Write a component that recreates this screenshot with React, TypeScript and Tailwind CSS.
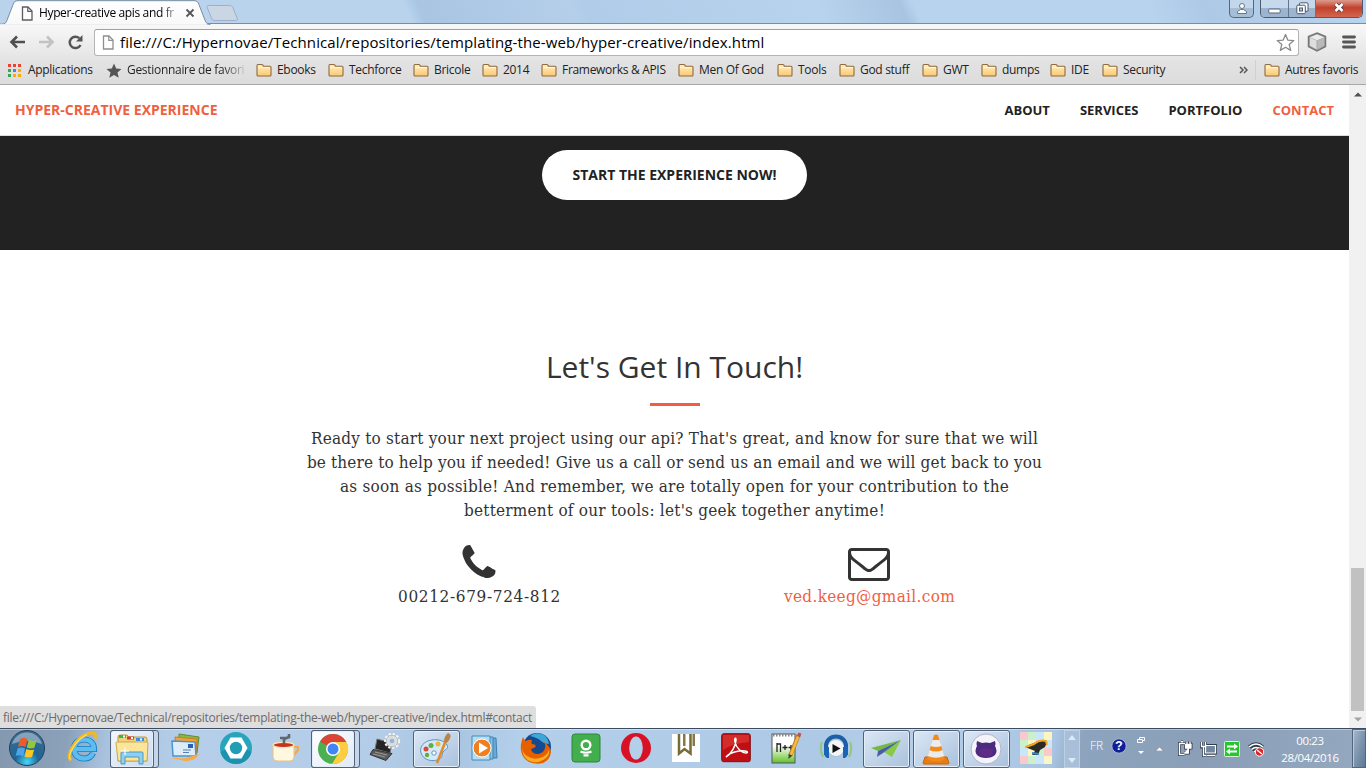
import type { ReactNode } from "react";

const sans = "font-['Open_Sans',sans-serif]";
const serif = "font-['DejaVu_Serif_Condensed','DejaVu_Serif',serif]";

function Svg({ w, h, className = "", children }: { w: number; h: number; className?: string; children: ReactNode }) {
  return (
    <svg width={w} height={h} viewBox={`0 0 ${w} ${h}`} className={`shrink-0 ${className}`} aria-hidden="true">
      {children}
    </svg>
  );
}

/* ---------- Window title bar ---------- */

function PageIcon({ stroke = "#5c5c5c" }: { stroke?: string }) {
  return (
    <Svg w={12} h={15}>
      <path d="M1.5 1h5.5l4 4v9h-9.5z" fill="#fff" stroke={stroke} strokeWidth="1.3" />
      <path d="M6.8 1v4.4h4.2" fill="none" stroke={stroke} strokeWidth="1.2" />
    </Svg>
  );
}

function TitleBar() {
  return (
    <div className="relative flex h-6 shrink-0 bg-[linear-gradient(65deg,#b9d3ed_0%,#b9d3ed_30%,#a9c5e2_31%,#b5cfea_42%,#b0cce8_43%,#b8d3ed_60%,#a8c4e1_66%,#b8d3ed_67%,#b8d3ed_84%,#adc9e6_88%,#b9d4ee_100%)]">
      <svg width="240" height="25" viewBox="0 0 240 25" className="absolute left-0 top-0" aria-hidden="true">
        <defs>
          <linearGradient id="tab" x1="0" y1="0" x2="0" y2="1">
            <stop offset="0" stopColor="#fff" />
            <stop offset="1" stopColor="#f8f8f8" />
          </linearGradient>
        </defs>
        <path d="M0 24.2h2c3 0 4-1.500 5-4l6-15.500c1-2.800 2-4 5-4h176c3 0 4 1.200 5 4l6 15.500c1 2.500 2 4 5 4v.8H0z" fill="url(#tab)" stroke="#7b8ca3" strokeWidth="1" />
        <path d="M0 24.700h207" stroke="#f8f8f8" />
        <path d="M208.500 5.500h21c2 0 2.800.8 3.400 2.200l4.300 10.600c.6 1.500 0 2.200-1.500 2.200h-20.500c-2 0-3-.8-3.600-2.200l-4.300-10.600c-.6-1.500-.1-2.200 1.200-2.200z" fill="#cbd6e4" stroke="#9db0c9" />
      </svg>
      <div className="relative flex h-6 w-52 items-center pl-[21px] pt-0.5">
        <PageIcon />
        <div className="ml-1.5 w-[139px] whitespace-nowrap bg-linear-to-r from-black from-86% to-[#ddd] bg-clip-text text-xs tracking-[-0.36px] text-transparent">
          Hyper-creative apis and fr
        </div>
        <Svg w={10} h={10} className="ml-[7px]">
          <path d="M1.500 1.500l7 7M8.500 1.500l-7 7" stroke="#555" strokeWidth="1.800" />
        </Svg>
      </div>
      <div className="relative ml-auto mr-[3px] flex h-[18px] items-start">
        <div className="mr-1.5 flex h-[18px] w-[25px] items-center justify-center rounded-b-[5px] border border-t-0 border-[#56677e] bg-linear-to-b from-[#c3d6ea] from-50% to-[#a6bdd6] to-50%">
          <Svg w={12} h={13}>
            <circle cx="6" cy="4" r="2.500" fill="#fff" stroke="#66758a" />
            <path d="M1.500 11.500v-2l3-2h3l3 2v2z" fill="#fff" stroke="#66758a" />
          </Svg>
        </div>
        <div className="flex h-[18px] w-[103px] overflow-hidden rounded-b-[5px] border border-t-0 border-[#4d5a70]">
          <div className="flex w-7 items-center justify-center border-r border-[#65758c] bg-linear-to-b from-[#c6d8eb] from-45% to-[#9db4ce] to-45%">
            <Svg w={13} h={12}>
              <rect x=".7" y="6" width="11.500" height="4" rx="1" fill="#fff" stroke="#58667b" />
            </Svg>
          </div>
          <div className="flex w-[27px] items-center justify-center border-r border-[#65758c] bg-linear-to-b from-[#c6d8eb] from-45% to-[#9db4ce] to-45%">
            <Svg w={13} h={13} className="-mt-px">
              <rect x="3.500" y=".8" width="8.500" height="8.500" rx="1" fill="#fff" stroke="#49566b" />
              <rect x=".8" y="3.200" width="8.500" height="8.500" rx="1" fill="#fff" stroke="#49566b" />
              <rect x="3.500" y="6" width="3" height="3" fill="#b8cbe0" stroke="#49566b" />
            </Svg>
          </div>
          <div className="flex flex-1 items-center justify-center bg-linear-to-b from-[#dc9a8e] from-0% via-[#c0402b] via-45% to-[#d4664e]">
            <Svg w={12} h={11} className="-mt-0.5">
              <path d="M2.500 2l7 7M9.500 2l-7 7" stroke="#5c3a42" strokeWidth="4.400" />
              <path d="M2.500 2l7 7M9.500 2l-7 7" stroke="#fff" strokeWidth="2.600" />
            </Svg>
          </div>
        </div>
      </div>
      <div className="absolute bottom-0 left-52 right-0 h-px bg-[#7b8ca3]" />
    </div>
  );
}

/* ---------- Address bar ---------- */

function Toolbar() {
  return (
    <div className="flex h-9 shrink-0 items-center bg-linear-to-b from-[#f8f8f8] to-[#e4e4e4] pl-[9px]">
      <Svg w={17} h={14}>
        <path d="M8 1.500L2.500 7L8 12.500M2.500 7H16" fill="none" stroke="#4f4f4f" strokeWidth="2.600" />
      </Svg>
      <Svg w={17} h={14} className="ml-3">
        <path d="M9 1.500L14.500 7L9 12.500M14.500 7H1" fill="none" stroke="#c2c2c2" strokeWidth="2.600" />
      </Svg>
      <Svg w={17} h={17} className="ml-3">
        <path d="M12.300 4.200A5.700 5.700 0 1 0 13.500 11" fill="none" stroke="#555" strokeWidth="2.500" />
        <path d="M15.500 1v6.500H9z" fill="#555" />
      </Svg>
      <div className="ml-[10px] flex h-[27px] w-[1205px] items-center rounded-[3px] border border-[#b4b4b4] border-t-[#9f9f9f] bg-white pl-[7px] pr-[3px]">
        <PageIcon stroke="#8f8f8f" />
        <span className="ml-1.5 text-[15px] tracking-[0.12px] text-black">
          file:///C:/Hypernovae/Technical/repositories/templating-the-web/hyper-creative/index.html
        </span>
        <Svg w={19} h={19} className="ml-auto">
          <path d="M9.500 1.500l2.300 5.600 6 .5-4.600 3.900 1.500 5.900-5.200-3.200-5.200 3.200 1.500-5.900L1.200 7.600l6-.5z" fill="#fff" stroke="#8a8a8a" strokeWidth="1.300" strokeLinejoin="round" />
        </Svg>
      </div>
      <Svg w={20} h={20} className="ml-2">
        <path d="M10 1l8.500 3.500v10L10 19l-8.500-4.500v-10z" fill="#a9a9a9" stroke="#777" strokeWidth="1.500" />
        <path d="M10 2.500l7 2.700-7 3-7-3z" fill="#ececec" />
        <path d="M3 5.800l6.500 2.800v8.700L3 13.800z" fill="#dedede" />
        <path d="M17 5.800l-6.500 2.800v8.700l6.500-3.500z" fill="#b9b9b9" />
      </Svg>
      <Svg w={14} h={14} className="ml-[15px]">
        <path d="M1.500 2h11M1.500 7h11M1.500 12h11" stroke="#555" strokeWidth="2.800" strokeLinecap="round" />
      </Svg>
    </div>
  );
}

/* ---------- Bookmarks ---------- */

function Folder() {
  return (
    <Svg w={16} h={14}>
      <defs>
        <linearGradient id="fold" x1="0" y1="0" x2="0" y2="1">
          <stop offset="0" stopColor="#ffeec4" />
          <stop offset="1" stopColor="#fbc970" />
        </linearGradient>
      </defs>
      <path d="M1 11.500V2.500q0-1 1-1h4q1 0 1 1l.3.800h6.700q1 0 1 1v7.700q0 1-1 1H2q-1 0-1-1z" fill="url(#fold)" stroke="#8f6b3f" strokeWidth="1.100" />
      <path d="M2 4.600h12" stroke="#fff7e2" />
    </Svg>
  );
}

const bookmarks: [string, string][] = [
  ["Ebooks", "w-[72px]"],
  ["Techforce", "w-[85px]"],
  ["Bricole", "w-[69px]"],
  ["2014", "w-[59px]"],
  ["Frameworks & APIS", "w-[137px]"],
  ["Men Of God", "w-[99px]"],
  ["Tools", "w-[62px]"],
  ["God stuff", "w-[83px]"],
  ["GWT", "w-[59px]"],
  ["dumps", "w-[69px]"],
  ["IDE", "w-[52px]"],
  ["Security", "w-[70px]"],
];

const appDots = ["#ea4335", "#ea4335", "#ea4335", "#34a853", "#4285f4", "#fbab05", "#34a853", "#fbab05", "#fbab05"];

function BookmarkBar() {
  return (
    <div className="flex h-[25px] shrink-0 items-center whitespace-nowrap border-b border-[#a8a8a8] bg-linear-to-b from-[#e3e3e3] to-[#dcdcdc] pb-1 pl-2 text-xs tracking-[-0.3px] text-[#222]">
      <div className="flex w-[98px] items-center">
        <Svg w={13} h={13}>
          {appDots.map((c, i) => (
            <rect key={i} x={(i % 3) * 5} y={Math.floor(i / 3) * 5} width="3" height="3" fill={c} />
          ))}
        </Svg>
        <span className="ml-[7px]">Applications</span>
      </div>
      <div className="flex w-[150px] items-center">
        <Svg w={16} h={15}>
          <path d="M8 .5l2.200 4.900 5.300.6-4 3.600 1.200 5.200L8 12.100l-4.700 2.700 1.200-5.200-4-3.600 5.300-.6z" fill="#555" />
        </Svg>
        <span className="ml-[5px] w-[118px] bg-linear-to-r from-[#222] from-80% to-[#ccc] bg-clip-text text-transparent">Gestionnaire de favori</span>
      </div>
      {bookmarks.map(([name, width]) => (
        <div key={name} className={`flex shrink-0 items-center gap-[5px] ${width}`}>
          <Folder />
          <span>{name}</span>
        </div>
      ))}
      <Svg w={9} h={8} className="ml-[67px]">
        <path d="M1 1l3 3-3 3M5 1l3 3-3 3" fill="none" stroke="#555" strokeWidth="1.500" />
      </Svg>
      <div className="ml-[7px] flex h-5 items-center gap-[5px] border-l border-[#c4d3e2] pl-2">
        <Folder />
        <span>Autres favoris</span>
      </div>
    </div>
  );
}

/* ---------- Web page ---------- */

function SiteNav() {
  return (
    <nav className="flex h-[51px] items-center justify-between border-b border-[#dcdcdc] bg-white px-[15px] font-bold text-[#222]">
      <a className="text-sm text-[#f05f40]">HYPER-CREATIVE EXPERIENCE</a>
      <div className="flex gap-[30px] pt-0.5 text-[13px]">
        <a>ABOUT</a>
        <a>SERVICES</a>
        <a>PORTFOLIO</a>
        <a className="text-[#f05f40]">CONTACT</a>
      </div>
    </nav>
  );
}

const paragraph: [string, string][] = [
  ["Ready to start your next project using our api? That's great, and know for sure that we will", "tracking-[0.21px]"],
  ["be there to help you if needed! Give us a call or send us an email and we will get back to you", "tracking-[0.145px]"],
  ["as soon as possible! And remember, we are totally open for your contribution to the", "tracking-[0.235px]"],
  ["betterment of our tools: let's geek together anytime!", "tracking-[0.23px]"],
];

function Site() {
  return (
    <div className="flex min-w-0 flex-1 flex-col bg-white">
      <SiteNav />
      <div className="flex h-[114px] shrink-0 justify-center bg-[#222] pt-3.5">
        <button className="h-[50px] w-[265px] rounded-full bg-white text-sm font-bold text-[#222]">START THE EXPERIENCE NOW!</button>
      </div>
      <section className="flex flex-1 flex-col items-center pt-[100px] text-[#333]">
        <h2 className="text-[30px] leading-[33px]">Let's Get In Touch!</h2>
        <hr className="mt-5 h-[3px] w-[50px] border-0 bg-[#f05f40]" />
        <div className={`mt-5 text-center text-[17px] leading-6 ${serif}`}>
          {paragraph.map(([line, tracking]) => (
            <div key={line} className={`whitespace-nowrap ${tracking}`}>{line}</div>
          ))}
        </div>
        <div className={`mt-5 grid grid-cols-[390px_390px] text-[17px] leading-6 ${serif}`}>
          <div className="flex flex-col items-center">
            <svg width="42" height="42" viewBox="0 0 1792 1792" className="mr-px" aria-hidden="true">
              <path fill="#333" d="M1600 1240q0 27-10 70.5t-21 68.5q-21 50-122 106-94 51-186 51-27 0-53-3.500t-57.500-12.500-47-14.500-55.500-20.500-49-18q-98-35-175-83-127-79-264-216t-216-264q-48-77-83-175-3-9-18-49t-20.500-55.500-14.500-47-12.500-57.500-3.500-53q0-92 51-186 56-101 106-122 25-11 68.500-21t70.500-10q14 0 21 3 18 6 53 76 11 19 30 54t35 63.500 31 53.500q3 4 17.500 25t21.500 35.500 7 28.500q0 20-28.500 50t-62 55-62 53-28.500 46q0 9 5 22.500t8.500 20.500 14 24 11.500 19q76 137 174 235t235 174q2 1 19 11.500t24 14 20.500 8.500 22.500 5q18 0 46-28.500t53-62 55-62 50-28.500q14 0 28.500 7t35.500 21.500 25 17.500q25 15 53.500 31t63.500 35 54 30q70 35 76 53 3 7 3 21z" />
            </svg>
            <span className="tracking-[0.66px]">00212-679-724-812</span>
          </div>
          <div className="flex flex-col items-center">
            <svg width="42" height="42" viewBox="0 0 1792 1792" className="mr-px" aria-hidden="true">
              <path fill="#333" d="M1664 1504v-768q-32 36-69 66-268 206-426 338-51 43-83 67t-86.500 48.500-102.500 24.500h-2q-48 0-102.500-24.500t-86.500-48.500-83-67q-158-132-426-338-37-30-69-66v768q0 13 9.500 22.500t22.500 9.500h1472q13 0 22.500-9.500t9.500-22.500zm0-1051v-24.500l-.5-13-3-12.500-5.500-9-9-7.500-14-2.500h-1472q-13 0-22.500 9.500t-9.500 22.500q0 168 147 284 193 152 401 317 6 5 35 29.500t46 37.500 44.500 31.500 50.500 27.500 43 9h2q20 0 43-9t50.500-27.500 44.500-31.500 46-37.500 35-29.500q208-165 401-317 54-43 100.500-115.500t46.500-131.500zm128-37v1088q0 66-47 113t-113 47h-1472q-66 0-113-47t-47-113v-1088q0-66 47-113t113-47h1472q66 0 113 47t47 113z" />
            </svg>
            <a className="tracking-[0.33px] text-[#f05f40]">ved.keeg@gmail.com</a>
          </div>
        </div>
      </section>
    </div>
  );
}

function ScrollBar() {
  return (
    <div className="flex w-[17px] shrink-0 flex-col items-center bg-[#f1f1f1] pb-1.5 pt-[7px]">
      <Svg w={8} h={5}>
        <path d="M0 4.500L4 .5l4 4z" fill="#505050" />
      </Svg>
      <div className="mt-auto h-[143px] w-[13px] bg-[#c1c1c1]" />
      <Svg w={8} h={5} className="mt-1.5">
        <path d="M0 .5l4 4 4-4z" fill="#a3a3a3" />
      </Svg>
    </div>
  );
}

/* ---------- Task bar ---------- */

function StartOrb() {
  return (
    <Svg w={38} h={38}>
      <defs>
        <radialGradient id="orb" cx=".5" cy=".9" r=".85">
          <stop offset="0" stopColor="#45d8f8" />
          <stop offset=".4" stopColor="#1d6596" />
          <stop offset="1" stopColor="#3f6c90" />
        </radialGradient>
      </defs>
      <circle cx="19" cy="19" r="17.500" fill="url(#orb)" stroke="#23405c" />
      <path d="M4 15a15.500 15.500 0 0 1 30 0q-15-6-30 0z" fill="#fff" opacity=".38" />
      <path d="M12 10q3.500-2 7.500.2l-2 7.800q-4-2-7.500-.3z" fill="#ef5a28" />
      <path d="M20.800 10.800q3.500 2 7.800.4l-2.200 7.600q-4 1.700-7.600-.3z" fill="#93c83d" />
      <path d="M9.700 19.300q3.500-1.700 7.400.3l-2 7.600q-3.800-2-7.500-.2z" fill="#4aa6e8" />
      <path d="M18.400 20q3.800 2 7.800.4l-2.200 7.500q-4 1.600-7.600-.4z" fill="#fdc422" />
    </Svg>
  );
}

function IeIcon() {
  return (
    <Svg w={32} h={34}>
      <path d="M7.500 18h19.500c0-5.500-4-9.500-10-9.500s-10 4-10 9.500 4 9.500 10 9.500c4 0 7.500-2 9-5.500" fill="none" stroke="#1b7cc0" strokeWidth="6.200" />
      <path d="M7.500 18h19.500c0-5.500-4-9.500-10-9.500s-10 4-10 9.500 4 9.500 10 9.500c4 0 7.500-2 9-5.500" fill="none" stroke="#5cbdf0" strokeWidth="4.400" />
      <path d="M4 29.500C-1.500 25 8 8 19 3.500c6-2.800 11-2 9.200 4" fill="none" stroke="#f4b91e" strokeWidth="3" />
      <path d="M3.500 28.500C0 24 9 8.500 20 3.800" fill="none" stroke="#ffe170" strokeWidth="1.100" />
    </Svg>
  );
}

function ExplorerIcon() {
  return (
    <Svg w={34} h={32}>
      <path d="M3 4q0-2 2-2h7l2 2h16q2 0 2 2v22H3z" fill="#efd27a" stroke="#b9973f" />
      <path d="M4 2h7v3H4z" fill="#3bb54a" /><path d="M12 3.500h7v3h-7z" fill="#d8362f" /><path d="M21 5h8v3h-8z" fill="#3d8fe0" />
      <path d="M8 3.500h2M16 5h2M25 6.500h2" stroke="#fff" strokeWidth="2" />
      <path d="M2 9h30q1 0 1 1l-1 18H3L1 10q0-1 1-1z" fill="#fae59a" stroke="#c9a953" />
      <path d="M6 31V20q0-1 1-1h20q1 0 1 1v11h-4v-7H10v7z" fill="#8fd0ef" stroke="#4c98c5" />
      <path d="M10 14v8M6 18h8" stroke="#fff" strokeWidth="1.200" />
    </Svg>
  );
}

function MailIcon() {
  return (
    <Svg w={34} h={32}>
      <path d="M10 2l20 3-2 16-18-3z" fill="#86b949" stroke="#5f8c34" />
      <path d="M6 5l22 2-1 16-20-2z" fill="#f2a03a" stroke="#ca7d20" />
      <path d="M3 9l23 1 1 14H4z" fill="#dcecf9" stroke="#4a95cf" strokeWidth="1.500" />
      <rect x="19" y="12" width="5" height="4" fill="#2b5eb5" />
      <path d="M14 18h8M14 20.500h6" stroke="#5b7fae" />
      <path d="M0 27c7-3 10 0 16-1s9-3 14-4c-3 5-6 6-11 7s-12-4-19-2z" fill="#f6ab4b" />
    </Svg>
  );
}

function HexIcon() {
  return (
    <Svg w={34} h={34}>
      <circle cx="17" cy="17" r="16" fill="#27a5bd" />
      <path d="M1.500 21A16 16 0 0 0 32.500 21Q17 12 1.500 21z" fill="#1b93ad" />
      <path d="M11.500 6.500h11L28.500 17l-6 10.500h-11L5.500 17z" fill="#fff" />
      <circle cx="17" cy="17" r="6.200" fill="#229db6" />
    </Svg>
  );
}

function CupIcon() {
  return (
    <Svg w={32} h={32}>
      <path d="M23 15h5v3l-5 6" fill="none" stroke="#f0a855" strokeWidth="2.200" />
      <path d="M3 13h21v12q0 4-4 4H7q-4 0-4-4z" fill="#fff8e0" stroke="#ecc377" />
      <ellipse cx="13.500" cy="13" rx="10.500" ry="2.600" fill="#c5321d" stroke="#fbe3b2" strokeWidth="1.200" />
      <path d="M14 11V7l5-2V2M10 6h7" fill="none" stroke="#62676d" strokeWidth="2.600" />
    </Svg>
  );
}

function ChromeIcon() {
  return (
    <Svg w={32} h={32}>
      <circle cx="16" cy="16" r="15" fill="#4caf50" />
      <path d="M16 16L3 8.500A15 15 0 0 1 29 8.500z" fill="#db4437" />
      <path d="M16 9h13.300A15 15 0 0 1 15 31l7-11.500z" fill="#ffcd40" />
      <circle cx="16" cy="16" r="7" fill="#fff" />
      <circle cx="16" cy="16" r="5.500" fill="#4285f4" />
    </Svg>
  );
}

function LaptopIcon() {
  return (
    <Svg w={34} h={32}>
      <path d="M8 7l15 4-2 10-15-4z" fill="#252525" stroke="#777" />
      <path d="M4 17.500l19 4-6 7-16-6z" fill="#5b5b5b" stroke="#333" />
      <path d="M6 20l12 3M4 22l12 3" stroke="#aaa" strokeWidth=".8" />
      <circle cx="23" cy="9" r="6.500" fill="#d9dde1" stroke="#f4f5f6" strokeWidth="3" strokeDasharray="2.200 1.600" />
      <circle cx="23" cy="9" r="5.800" fill="none" stroke="#b5babf" />
      <circle cx="23" cy="9" r="2.300" fill="#9ab5d0" />
    </Svg>
  );
}

function PaintIcon() {
  return (
    <Svg w={36} h={34}>
      <path d="M14 8C6 9 1 15 3 21s9 9 16 7 4-5 6-8 6-3 4-7-8-6-15-5z" fill="#d5e9f7" stroke="#5c93bf" />
      <circle cx="8" cy="17" r="2.500" fill="#d64a3a" /><circle cx="13" cy="13.500" r="2.500" fill="#5bb147" />
      <circle cx="20" cy="12" r="2.500" fill="#efb83a" /><circle cx="9" cy="23" r="2.200" fill="#5bb147" /><circle cx="16" cy="21" r="2.200" fill="#fff" stroke="#5c93bf" />
      <path d="M28 8L19 31" stroke="#e08a32" strokeWidth="2.600" />
      <path d="M26 10q0-6 4-9 3 1 2.500 4T28.500 11z" fill="#b98449" />
    </Svg>
  );
}

function MediaPlayerIcon() {
  return (
    <Svg w={32} h={30}>
      <path d="M8 5h18l1 20H9z" fill="#6ba9d4" stroke="#3c82b4" /><path d="M5 4h18v22H5z" fill="#8cc1e2" stroke="#3c82b4" />
      <path d="M2 3h18v24H2z" fill="#b9dcf0" stroke="#3c8dbd" />
      <circle cx="12" cy="15" r="9" fill="#f0801f" stroke="#fff" />
      <path d="M9 9.500v11l9-5.500z" fill="#fff" />
    </Svg>
  );
}

function FirefoxIcon() {
  return (
    <Svg w={32} h={32}>
      <circle cx="17" cy="15" r="14" fill="#17498f" />
      <path d="M10 4q6-5 14-1 4 3 5 9-5 0-8-3t-11-5z" fill="#3fa7d8" />
      <path d="M3 5q1 3 3 4 3-2 6-1-1 2 0 4 3 0 4 2-2 3-5 3 1 5 7 5 6-1 7-6 1-3-1-6 6 4 7 10-1 8-8 11-7 2-14-1C0 25-1 15 3 5z" fill="#e66000" />
      <path d="M2 14q0 7 5 10 6 4 13 2 7-2 9-8 1 4-3 8-6 5-13 4Q2 28 2 14z" fill="#ffae22" />
    </Svg>
  );
}

function GreenIcon() {
  return (
    <Svg w={30} h={30}>
      <rect x="1" y="1" width="28" height="28" rx="3" fill="#43ae4e" stroke="#2c8738" />
      <circle cx="15" cy="12" r="4.300" fill="none" stroke="#fff" strokeWidth="2.400" />
      <path d="M9.500 18.500q5.500 2.500 11 0M12.500 22.300h5" fill="none" stroke="#fff" strokeWidth="2.200" />
    </Svg>
  );
}

function OperaIcon() {
  return (
    <Svg w={32} h={32}>
      <circle cx="16" cy="16" r="15" fill="#d81224" />
      <ellipse cx="16" cy="16" rx="6.800" ry="11.500" fill="#b4cfea" />
    </Svg>
  );
}

function RibbonIcon() {
  return (
    <Svg w={30} h={30}>
      <rect x="1" y="1" width="28" height="28" fill="#fff" />
      <path d="M8 1v19.500l5.500-4.500 6 4.500V1" fill="none" stroke="#766c34" strokeWidth="2.500" />
      <path d="M12 1h2.500v12H12zM21.500 1H24v12h-2.500z" fill="#766c34" opacity=".9" />
    </Svg>
  );
}

function AcrobatIcon() {
  return (
    <Svg w={30} h={30}>
      <rect x=".7" y=".7" width="28.600" height="28" rx="2" fill="#c00f14" stroke="#7e1014" />
      <path d="M2 2h26v7Q12 10 2 17z" fill="#d42c2a" />
      <path d="M5 24c5-3 10-11 10-17 0-3-2-2-1 2 1 6 7 11 11 11 4-1-1-3-7-2S8 20 5 24z" fill="none" stroke="#fff" strokeWidth="1.500" />
    </Svg>
  );
}

function NotepadIcon() {
  return (
    <Svg w={32} h={34}>
      <defs>
        <linearGradient id="np" x1="0" y1="0" x2="0" y2="1">
          <stop offset=".4" stopColor="#fff" /><stop offset="1" stopColor="#61c224" />
        </linearGradient>
      </defs>
      <rect x="2" y="3" width="23" height="29" fill="url(#np)" stroke="#556" />
      <path d="M3 4h21" stroke="#888" strokeWidth="3" strokeDasharray="1.500 1.500" />
      <path d="M7 21v-9M7 13h3.500v8M12.500 16.500h5M15 14v5M18.500 16.500h5M21 14v5" fill="none" stroke="#222" strokeWidth="1.300" />
      <path d="M28.500 4l-8 20" stroke="#b67a1e" strokeWidth="4.200" /><path d="M28.300 5l-7.500 19" stroke="#f6bc3d" strokeWidth="2.600" />
      <path d="M27 5l1.500-3.500 3 1.200L30 6.200z" fill="#b9505a" /><path d="M18.500 23l4 1.500-4 3.500z" fill="#443" />
    </Svg>
  );
}

function HeadphonesIcon() {
  return (
    <Svg w={34} h={30}>
      <path d="M3 9q-3 7 1 15M31 9q3 7-1 15" fill="none" stroke="#93c77e" strokeWidth="2" />
      <circle cx="17" cy="15" r="8.500" fill="#f3f6f9" stroke="#abc0d3" />
      <path d="M7 22V13a10 9.500 0 0 1 20 0v9" fill="none" stroke="#1b5fa8" strokeWidth="4" />
      <path d="M5 14h5v11H8q-3-2-3-6zM29 14h-5v11h2q3-2 3-6z" fill="#1a65b5" />
      <path d="M13.500 11v9l8-4.500z" fill="#111" />
    </Svg>
  );
}

function PlaneIcon() {
  return (
    <Svg w={32} h={22}>
      <path d="M31 2L1 10l7 3z" fill="#74b943" /><path d="M31 2L8 13l-1 6z" fill="#4a5ca8" />
      <path d="M31 2L14 14l8 5z" fill="#87cb45" /><path d="M31 2L9 18l5-4z" fill="#36478f" />
    </Svg>
  );
}

function VlcIcon() {
  return (
    <Svg w={30} h={32}>
      <path d="M4 24h22l2 6q0 1-1 1H3q-1 0-1-1z" fill="#e87c12" stroke="#c96508" />
      <path d="M13 2q2-1 4 0l7 24q-9 5-18 0z" fill="#f28a1c" />
      <path d="M11.500 7h7l2 6q-5.500 2-11 0zM8.500 17q6.500 3 13 0l1.800 6q-8.300 3.500-16.600 0z" fill="#ececec" />
    </Svg>
  );
}

function GithubIcon() {
  return (
    <Svg w={32} h={32}>
      <circle cx="16" cy="16" r="15" fill="#f5f3fa" stroke="#b3b3cc" />
      <path d="M7 8l5 2q4-1 8 0l5-2q1 3 0 5 3 5 0 9-3 3-9 3t-9-3q-3-4 0-9-1-2 0-5z" fill="#4b2a7f" />
      <path d="M9 17q7-4 14 0l-1 5q-6 3-12 0z" fill="#5f2b86" />
    </Svg>
  );
}

const mosaic = ["#f9c9cc", "#cbf0cc", "#cbe6fb", "#fdf6c4", "#cbf0cc", "#fdf6c4", "#f9c9cc", "#cbe6fb", "#cbe6fb", "#fdf6c4", "#cbf0cc", "#f9c9cc", "#f9c9cc", "#cbf0cc", "#cbe6fb", "#fdf6c4"];

function MosaicIcon() {
  return (
    <Svg w={32} h={32}>
      {mosaic.map((c, i) => (
        <rect key={i} x={(i % 4) * 8} y={Math.floor(i / 4) * 8} width="8" height="8" fill={c} />
      ))}
      <path d="M5 15q5-3 9-4 6-4 12-2 1 3-1 6l-5 3-2 5h-6l3-4-5-2z" fill="#2c2a26" />
      <path d="M6 15l8-3q6-5 12-3l1 4" fill="none" stroke="#f2a71b" strokeWidth="2" />
      <path d="M12 21l7 1" stroke="#2f8fd6" strokeWidth="2" />
    </Svg>
  );
}

const openButton = "flex h-[38px] items-center justify-center rounded-[3px] border border-[#51627a] bg-linear-to-br shadow-[inset_0_0_0_1px_#e3eefa]";

function Slot({ children }: { children: ReactNode }) {
  return <div className="flex w-[50px] shrink-0 items-center justify-center pb-0.5">{children}</div>;
}

function OpenSlot({ children }: { children: ReactNode }) {
  return (
    <div className="flex w-[50px] shrink-0 items-center justify-center">
      <div className={`w-[47px] from-[#dbe8f5] to-[#a9c1dc] ${openButton}`}>{children}</div>
    </div>
  );
}

function StackSlot({ bright = false, children }: { bright?: boolean; children: ReactNode }) {
  return (
    <div className="flex w-[50px] shrink-0 items-center">
      <div className="flex h-[38px] rounded-[3px] border border-[#51627a] bg-[#c3d6ea] pr-1">
        <div className={`-my-px -ml-px w-11 ${openButton} ${bright ? "from-white to-[#dfeaf6]" : "from-[#f4f8fc] to-[#c9dbee]"}`}>{children}</div>
      </div>
    </div>
  );
}

function Tray() {
  return (
    <div className="flex flex-1 items-center text-white">
      <div className="flex h-[38px] w-4 flex-col items-center justify-between border border-[#c8d8e8]/70 bg-[#a7bfd9] py-1">
        <Svg w={8} h={5}><path d="M0 5l4-5 4 5z" fill="#dce9f6" /></Svg>
        <Svg w={8} h={5}><path d="M0 0l4 5 4-5z" fill="#dce9f6" /></Svg>
      </div>
      <span className="ml-[10px] pb-1.5 text-xs font-light tracking-[-0.1px]">FR</span>
      <Svg w={16} h={16} className="mb-[5px] ml-2">
        <circle cx="8" cy="8" r="7.200" fill="#0f1f9c" stroke="#aeb7cf" />
        <path d="M3 6q5-6 10 0-5-2-10 0z" fill="#5d7ce6" opacity=".7" />
        <text x="8" y="12.300" textAnchor="middle" fontSize="12" fontWeight="bold" fill="#fff" fontFamily="Liberation Sans">?</text>
      </Svg>
      <Svg w={10} h={20} className="mb-1.5 ml-[9px]">
        <path d="M3.500 3.500v-2h5v3h-2M1.500 3.500h5v3h-5z" fill="none" stroke="#fff" />
        <path d="M2 15h6l-3 3z" fill="#fff" />
      </Svg>
      <Svg w={9} h={5} className="ml-[9px]"><path d="M.5 5l4-4 4 4z" fill="#fff" stroke="#5d6f87" strokeWidth=".5" /></Svg>
      <Svg w={16} h={17} className="ml-[13px]">
        <path d="M8 3.500H2.500v11h5M4 1.500h2" fill="none" stroke="#333d4d" strokeWidth="3" />
        <path d="M8.500 4.500v3.500h5.500V4.500zM10 1.500v3M13 1.500v3M11.300 8v5h-4" stroke="#333d4d" strokeWidth="3" fill="none" />
        <path d="M8 3.500H2.500v11h5M4 1.500h2" fill="none" stroke="#fff" strokeWidth="1.400" />
        <path d="M8.500 4.500v3.500h5.500V4.500zM10 1.500v3M13 1.500v3M11.300 8v5h-4" stroke="#fff" strokeWidth="1.300" fill="#fff" />
      </Svg>
      <Svg w={17} h={16} className="ml-[7px]">
        <path d="M5.500 4.500h10v7.500h-10zM7 14.500h8M1.500 1v5h4V1M3.500 6v8.500h3" fill="none" stroke="#333d4d" strokeWidth="2.800" />
        <path d="M5.500 4.500h10v7.500h-10z" fill="#71879f" stroke="#fff" strokeWidth="1.200" />
        <path d="M7 14.500h8M1.500 1v4.500h4V1M3.500 6v8.500h3" fill="none" stroke="#fff" strokeWidth="1.300" />
      </Svg>
      <Svg w={16} h={16} className="ml-[7px]">
        <rect x=".5" y=".5" width="15" height="15" rx="1" fill="#27c62d" stroke="#d6f7d5" />
        <path d="M3 5.500h8M13 10.500H5" stroke="#fff" strokeWidth="2" /><path d="M10 2.500l4 3-4 3zM6 7.500l-4 3 4 3z" fill="#fff" />
      </Svg>
      <Svg w={17} h={16} className="ml-2">
        <path d="M1 6q7-6 14 0M3.500 8.500q4.500-4 9 0M6 11q2-2 4 0" fill="none" stroke="#303b4c" strokeWidth="3.200" />
        <path d="M1 6q7-6 14 0M3.500 8.500q4.500-4 9 0M6 11q2-2 4 0" fill="none" stroke="#fff" strokeWidth="1.600" />
        <circle cx="11.500" cy="11" r="4.200" fill="#e02424" stroke="#fff" /><path d="M9 9l5 4" stroke="#fff" strokeWidth="1.400" />
      </Svg>
      <div className="ml-auto mr-3 w-[60px] text-center text-[11.500px] leading-[17px] tracking-[-0.35px]">
        <div>00:23</div>
        <div>28/04/2016</div>
      </div>
      <div className="h-full w-3.5 border border-[#54667d] bg-linear-to-br from-[#a7bace] via-[#7e95ae] to-[#5d7898] shadow-[inset_1px_1px_0_#b9c9da]" />
    </div>
  );
}

function TaskBar() {
  return (
    <footer className="flex h-10 shrink-0 items-stretch border-t border-[#3d4b60] bg-[linear-gradient(100deg,#8498af_0%,#8ba1ba_5%,#a9c3df_8%,#b5cfea_14%,#b3cde8_28%,#a9c4e0_33%,#b4cfea_38%,#aec9e5_60%,#b5cfea_66%,#a9c5e1_77%,#8da4be_79%,#8a9fb7_88%,#94a9c0_100%)] shadow-[inset_0_1px_0_#ffffff66]">
      <div className="flex w-[61px] shrink-0 items-center pb-px pl-2"><StartOrb /></div>
      <div className="flex w-[50px] shrink-0 items-center pb-0.5 pl-1.5"><IeIcon /></div>
      <div className="-ml-px mr-px flex"><StackSlot><ExplorerIcon /></StackSlot></div>
      <Slot><MailIcon /></Slot>
      <Slot><HexIcon /></Slot>
      <Slot><CupIcon /></Slot>
      <div className="flex"><StackSlot bright><ChromeIcon /></StackSlot></div>
      <Slot><LaptopIcon /></Slot>
      <OpenSlot><PaintIcon /></OpenSlot>
      <Slot><MediaPlayerIcon /></Slot>
      <Slot><FirefoxIcon /></Slot>
      <Slot><GreenIcon /></Slot>
      <Slot><OperaIcon /></Slot>
      <Slot><RibbonIcon /></Slot>
      <Slot><AcrobatIcon /></Slot>
      <Slot><NotepadIcon /></Slot>
      <Slot><HeadphonesIcon /></Slot>
      <OpenSlot><PlaneIcon /></OpenSlot>
      <OpenSlot><VlcIcon /></OpenSlot>
      <OpenSlot><GithubIcon /></OpenSlot>
      <div className="mr-[3px] flex"><Slot><MosaicIcon /></Slot></div>
      <Tray />
    </footer>
  );
}

export default function App() {
  return (
    <div className={`flex h-[768px] w-[1366px] flex-col overflow-hidden ${sans}`}>
      <TitleBar />
      <Toolbar />
      <BookmarkBar />
      <main className="relative flex min-h-0 flex-1">
        <Site />
        <ScrollBar />
        <div className="absolute bottom-0 left-0 flex h-[22px] w-[536px] items-center whitespace-nowrap rounded-tr-[3px] bg-[#dedede] pl-[3px] pt-px text-xs tracking-[-0.28px] text-[#6b6b6b]">
          file:///C:/Hypernovae/Technical/repositories/templating-the-web/hyper-creative/index.html#contact
        </div>
      </main>
      <TaskBar />
    </div>
  );
}
